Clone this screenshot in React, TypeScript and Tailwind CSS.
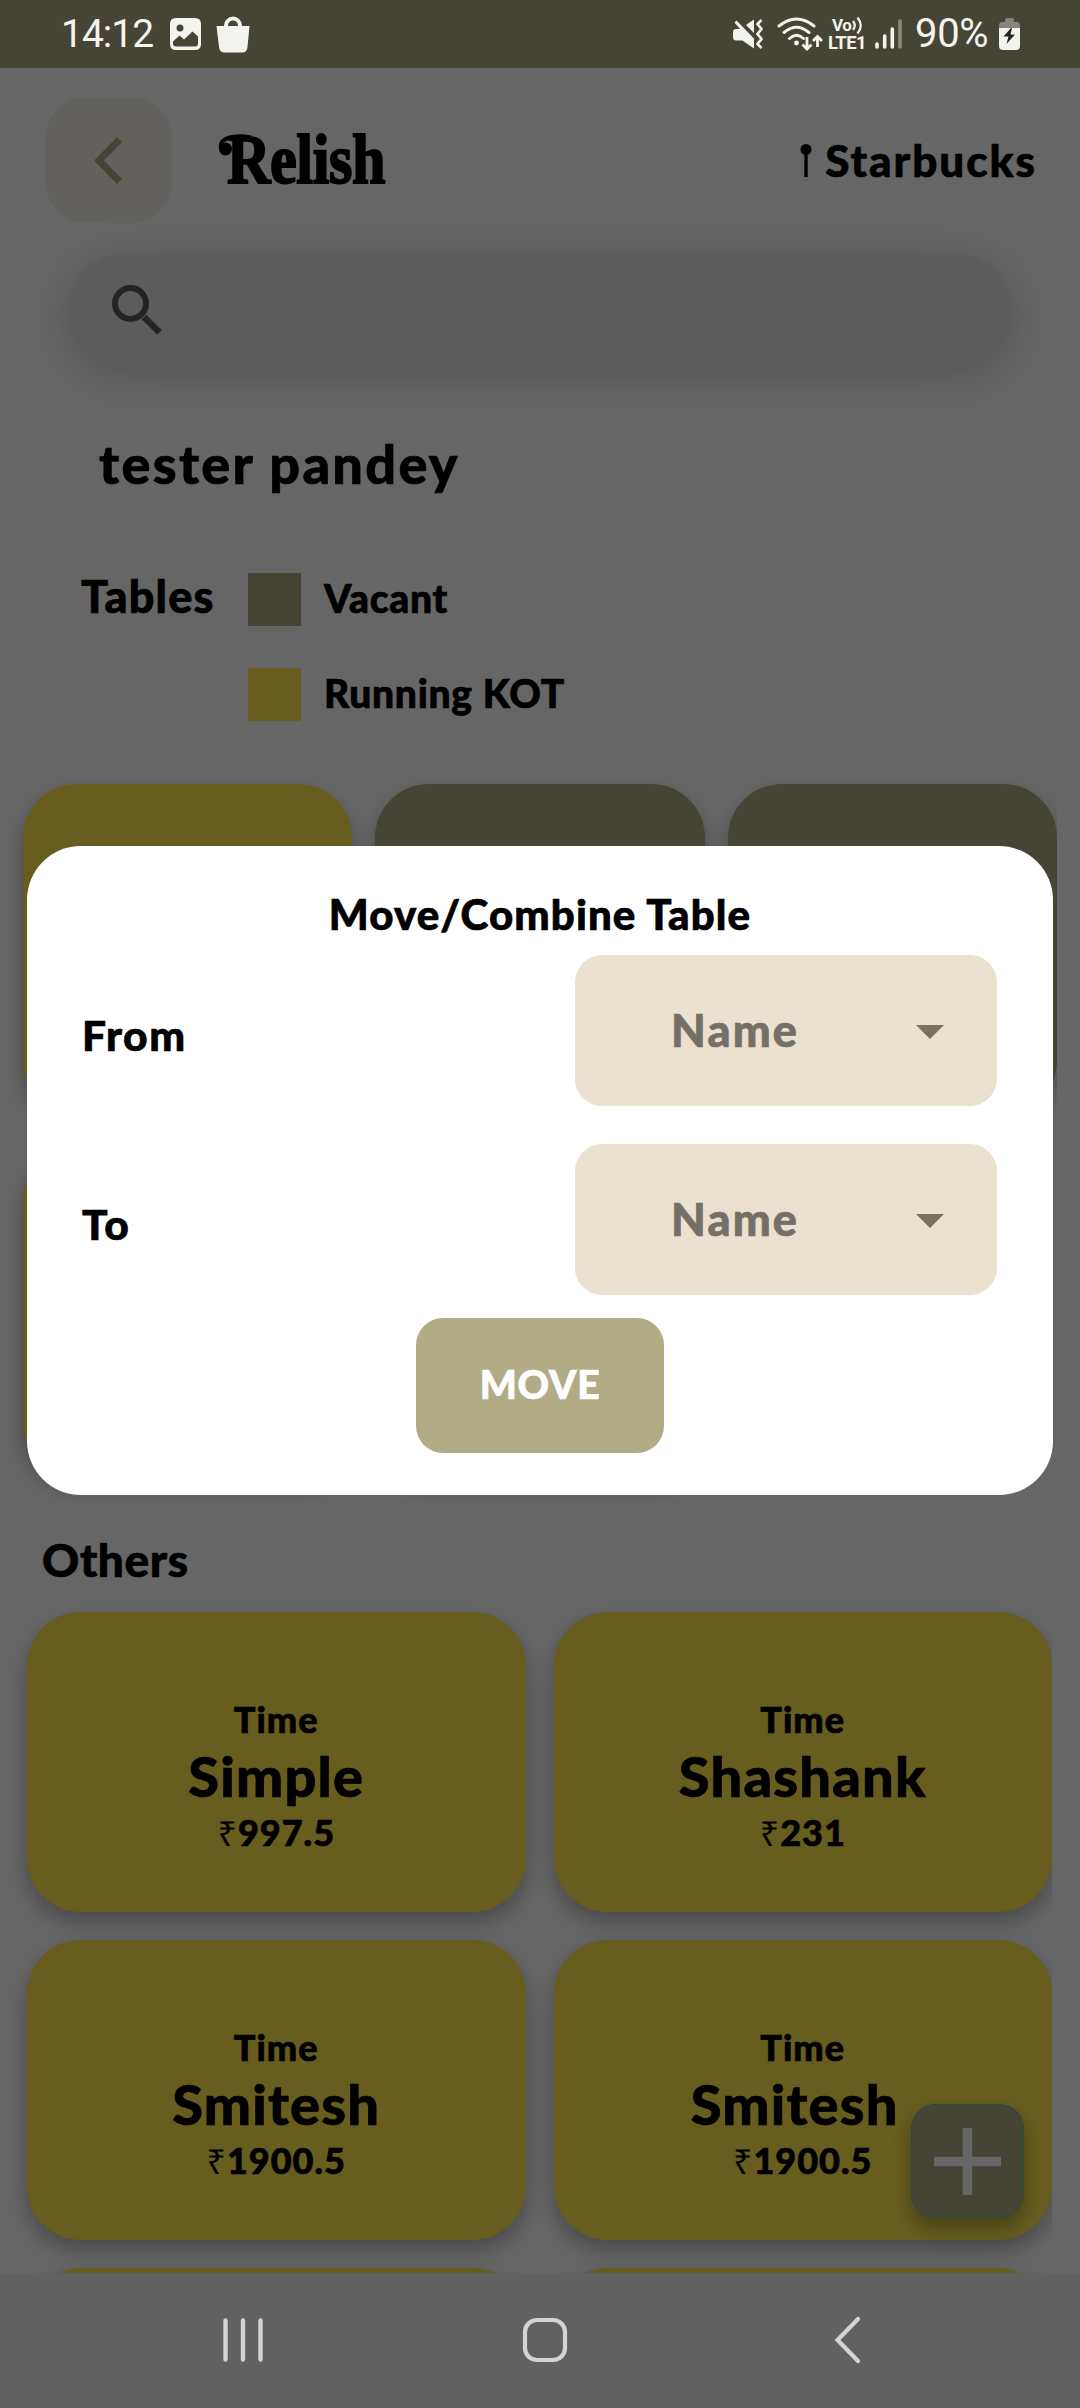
import React from "react";

const dark = "shadow-[0_10px_20px_rgba(0,0,0,0.28)]";

function StatusBar() {
  return (
    <div className="flex h-[68px] shrink-0 items-center justify-between bg-[#464434] pl-[61px] pr-[59px] text-[#f3f3f0] [-webkit-text-stroke:0px]">
      <div className="flex items-center">
        <span className="w-[109px] font-['Roboto'] text-[39px] leading-[68px] tracking-[-1px]">14:12</span>
        <svg width="31" height="32" viewBox="0 0 31 32" className="shrink-0">
          <path fillRule="evenodd" fill="currentColor" d="M6 0H25Q31 0 31 6V26Q31 32 25 32H6Q0 32 0 26V6Q0 0 6 0ZM10 6.500A3.500 3.500 0 1 0 10 13.500A3.500 3.500 0 1 0 10 6.500ZM3 23.500V25.500Q3 28.500 6 28.500H25Q28 28.500 28 25.500V18.500L22.500 13.500L14 21.500L9.500 17.500Z" />
        </svg>
        <svg width="34" height="37" viewBox="0 0 34 37" className="ml-[15px] shrink-0">
          <path d="M10 12V9.500A7 7 0 0 1 24 9.500V12" fill="none" stroke="currentColor" strokeWidth="4" />
          <path fill="currentColor" d="M.5 10H33.500L31.500 31Q31 36.500 26 36.500H8.500Q3.500 36.500 3 31Z" />
        </svg>
      </div>
      <div className="flex items-center">
        <svg width="30" height="30" viewBox="0 0 30 30">
          <path fill="currentColor" d="M0 13Q0 10 3 10H7L1.500 3.500L3.500 1.500L21 19.500V29.500L9.500 21.500H3Q0 21.500 0 18ZM13 6L21 .5V14Z" />
          <path fill="none" stroke="currentColor" strokeWidth="2.600" d="M28.500 1L24.500 5L28.500 10L24.500 15L28.500 20L24.500 25L28.500 29" />
        </svg>
        <svg width="46" height="34" viewBox="0 0 46 34" className="ml-[14px]" fill="none" stroke="currentColor" strokeLinecap="round" strokeWidth="3">
          <path d="M2 9Q19.500-5 37 9M7 15.500Q19.500 5 32 15.500M12.500 21.500Q19.500 15 26.500 21.500" />
          <circle cx="19.500" cy="26" r="2.400" fill="currentColor" stroke="none" />
          <path strokeLinecap="butt" strokeWidth="2.800" d="M30 20V32M25.500 27.500L30 32L34.500 27.500M40.500 30V19M36 24L40.500 19.500L45 24" />
        </svg>
        <div className="ml-[5px] flex w-[37px] flex-col font-['Roboto'] font-bold">
          <div className="flex h-[17px] items-center pl-[4px] text-[17px] leading-[17px] tracking-[-0.5px]">
            Vo
            <svg width="11" height="17" viewBox="0 0 11 17" fill="none" stroke="currentColor" strokeWidth="2.200" className="ml-px">
              <path d="M1 4Q4.500 8.500 1 13M5.500 .5Q12 8.500 5.500 16.500" />
            </svg>
          </div>
          <span className="h-[17px] text-[18.500px] leading-[19px] tracking-[-0.600px]">LTE1</span>
        </div>
        <svg width="27" height="30" viewBox="0 0 27 30" className="ml-[10px]" stroke="currentColor" strokeWidth="3.600" strokeLinecap="round">
          <path d="M2 25V28M9.700 17V28M17.300 10V28" />
          <path opacity=".4" d="M25 2V28" />
        </svg>
        <span className="ml-[13px] w-[84px] font-['Roboto'] text-[40px] leading-[68px] tracking-[-0.300px]">90%</span>
        <svg width="21" height="32" viewBox="0 0 21 32" className="mr-[1px]">
          <path fill="#86857a" d="M6 4V2Q6 0 8 0H13Q15 0 15 2V4H18Q21 4 21 8V10H0V8Q0 4 3 4Z" />
          <path fill="currentColor" d="M0 10H21V28Q21 32 17 32H4Q0 32 0 28Z" />
          <path fill="#222" d="M12 10L4.500 18.500H9.500L7.500 26L16 16.500H11.500L13 10Z" />
        </svg>
      </div>
    </div>
  );
}

function Header() {
  return (
    <div className="mt-[29px] flex h-[126px] items-center pl-[45px] pr-[43px]">
      <div className="flex h-[126px] w-[127px] items-center justify-center rounded-[42px] bg-[#62615d]">
        <svg width="28" height="47" viewBox="0 0 28 47" className="mr-[2px]">
          <path fill="none" stroke="#464434" strokeWidth="7" d="M25.500 2.500L5 23.500L25.500 44.500" />
        </svg>
      </div>
      <div className="relative ml-[55px]">
        <span className="inline-block origin-left scale-x-[0.86] font-['Liberation_Serif'] text-[70px] font-bold leading-[80px] tracking-[-0.500px] [-webkit-text-stroke:2px_black]">Relish</span>
        {/* Flourish on the logo's capital */}
        <svg width="34" height="26" viewBox="0 0 34 26" className="absolute left-[-9px] top-[13px]">
          <path fill="none" stroke="#000" strokeWidth="4" d="M33 4.500C16 1 1 5 3 15" />
          <circle cx="7.500" cy="16" r="6.500" />
        </svg>
      </div>
      <svg width="12" height="33" viewBox="0 0 12 33" className="ml-auto">
        <circle cx="6" cy="5.500" r="5.500" />
        <path d="M4.300 8H7.700V33H4.300Z" />
      </svg>
      <span className="ml-[13px] text-[44px] font-black leading-[50px] tracking-[2px]">Starbucks</span>
    </div>
  );
}

function Legend() {
  return (
    <div className="mt-[79px] flex h-[148px] pl-[81px]">
      <span className="-mt-[3px] w-[167px] text-[45px] font-black leading-[53px] tracking-[1.200px]">Tables</span>
      <div className="flex flex-col gap-[42px]">
        {[
          ["Vacant", "h-[53px] w-[53px] bg-[#464434]"],
          ["Running KOT", "h-[53px] w-[53px] bg-[#665d1e]"],
        ].map(([label, cls]) => (
          <div key={label} className="flex h-[53px]">
            <div className={cls} />
            <span className="-mt-[1px] ml-[23px] text-[39px] font-black leading-[53px] tracking-[0.700px]">{label}</span>
          </div>
        ))}
      </div>
    </div>
  );
}

function OrderCard({ name, price, nameClass = "" }: { name?: string; price?: string; nameClass?: string }) {
  return (
    <div className={`flex h-[300px] flex-col items-center rounded-[54px] bg-[#665d1e] pt-[85px] ${dark}`}>
      {name && (
        <>
          <span className="text-[36px] font-black leading-[44px] tracking-[1.100px]">Time</span>
          <span className={`mt-[5px] text-[56px] font-black leading-[60px] tracking-[1.200px] ${nameClass}`}>{name}</span>
          <span className="mt-[4px] text-[36px] font-black leading-[44px] tracking-[1px]">
            <span className="font-['Noto_Sans'] text-[34px] font-normal [-webkit-text-stroke:0px]">₹</span>
            {price}
          </span>
        </>
      )}
    </div>
  );
}

function SelectRow({ label }: { label: string }) {
  return (
    <div className="flex h-[151px] w-full items-center justify-between pl-[55px] pr-[56px]">
      <span className="mt-[8px] text-[42.500px] font-black leading-[50px] tracking-[1.600px]">{label}</span>
      <div className="flex h-[151px] w-[422px] items-center rounded-[27px] bg-[#eae1cf] pl-[96px] pr-[53px]">
        <span className="-mt-[1px] text-[45px] font-black leading-[52px] tracking-[2.200px] text-[#757067]">Name</span>
        <svg width="28" height="14" viewBox="0 0 28 14" className="ml-auto mt-[3px]">
          <path fill="#7a705c" d="M0 0H28L14 14Z" />
        </svg>
      </div>
    </div>
  );
}

function MoveDialog() {
  return (
    <div className="absolute left-[27px] top-[846px] flex h-[649px] w-[1026px] flex-col items-center rounded-[54px] bg-white pt-[43px]">
      <span className="text-[42px] font-black leading-[50px] tracking-[1.100px]">Move/Combine Table</span>
      <div className="mt-[16px] flex w-full flex-col gap-[38px]">
        <SelectRow label="From" />
        <SelectRow label="To" />
      </div>
      <div className="mt-[23px] flex h-[135px] w-[248px] items-center justify-center rounded-[27px] bg-[#b1ab86]">
        <span className="-mt-[3px] text-[39px] font-black leading-[48px] tracking-[0.800px] text-white">MOVE</span>
      </div>
    </div>
  );
}

function NavBar() {
  return (
    <div className="absolute bottom-0 left-0 flex h-[135px] w-full items-center bg-[#616161] pb-[1px] pl-[221px] text-[#d4d4d4]">
      <svg width="44" height="46" viewBox="0 0 44 46" fill="none" stroke="currentColor" strokeWidth="4.400" strokeLinecap="round">
        <path d="M4.500 3.500V42.500M22 3.500V42.500M39.500 3.500V42.500" />
      </svg>
      <svg width="46" height="46" viewBox="0 0 46 46" className="ml-[257px]" fill="none" stroke="currentColor" strokeWidth="4.200">
        <rect x="3" y="3" width="40" height="40" rx="12" />
      </svg>
      <svg width="28" height="48" viewBox="0 0 28 48" className="ml-[266px]" fill="none" stroke="currentColor" strokeWidth="4.200" strokeLinecap="round">
        <path d="M24 3L3.500 24L24 45" />
      </svg>
    </div>
  );
}

export default function App() {
  return (
    <div className="relative flex h-[2408px] w-[1080px] flex-col overflow-hidden bg-[#666] font-['Lato',sans-serif] text-black [-webkit-text-stroke:0.7px]">
      <StatusBar />
      <Header />
      <div className="mx-[69px] mt-[31px] flex h-[112px] shrink-0 items-center rounded-full bg-[#5c5c5c] pl-[43px] shadow-[0_8px_44px_rgba(0,0,0,0.18)]">
        <svg width="50" height="50" viewBox="0 0 50 50" fill="none" stroke="#242424">
          <circle cx="18.500" cy="18.500" r="15.500" strokeWidth="6" />
          <path strokeWidth="6.500" d="M32 32L47.500 47.500" />
        </svg>
      </div>
      <span className="ml-[99px] mt-[68px] h-[60px] text-[54px] font-black leading-[60px] tracking-[2.300px]">tester pandey</span>
      <Legend />
      <div className="mt-[63px] grid grid-cols-3 gap-x-[23px] gap-y-[34px] pl-[23px] pr-[23px] [clip-path:inset(-40px_23px_-60px_0px)]">
        {[0, 1, 2, 3, 4].map((i) => (
          <div key={i} className={`h-[330px] rounded-[54px] ${dark} ${i === 0 || i === 3 ? "bg-[#665d1e]" : "bg-[#464434]"}`} />
        ))}
      </div>
      <span className="ml-[42px] mt-[54px] h-[56px] text-[46px] font-black leading-[56px] tracking-[0.600px]">Others</span>
      <div className="mt-[24px] grid shrink-0 grid-cols-2 gap-[28px] pl-[27px] pr-[28px] [clip-path:inset(-40px_28px_-60px_0px)]">
        <OrderCard name="Simple" price="997.5" />
        <OrderCard name="Shashank" price="231" />
        <OrderCard name="Smitesh" price="1900.5" />
        <OrderCard name="Smitesh" price="1900.5" nameClass="pr-[16px]" />
        <OrderCard />
        <OrderCard />
      </div>
      <div className="absolute left-[911px] top-[2104px] flex h-[114px] w-[113px] items-center justify-center rounded-[24px] border border-[#24503a] bg-[#464434] shadow-[0_10px_20px_rgba(0,0,0,0.3)]">
        <svg width="67" height="67" viewBox="0 0 67 67">
          <path stroke="#666" strokeWidth="9.500" d="M33.500 0V67M0 33.500H67" />
        </svg>
      </div>
      <MoveDialog />
      <NavBar />
    </div>
  );
}
